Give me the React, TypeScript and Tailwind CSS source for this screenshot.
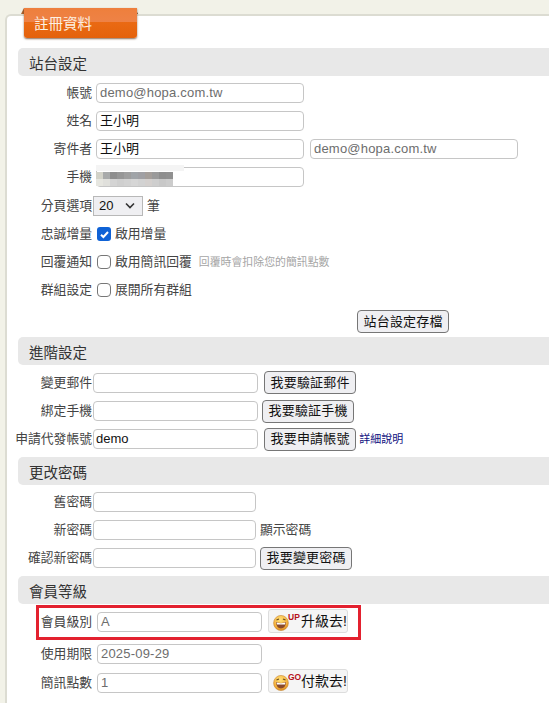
import React from "react";

const cjk = { fontFamily: '"Liberation Sans", "Noto Sans CJK TC", sans-serif' };

function Field({ value = "", w, dim = false, bold = false }: { value?: string; w: string; dim?: boolean; bold?: boolean }) {
  return (
    <div className={`${w} h-5 shrink-0 flex items-center rounded-[4px] border border-[#c6c6c6] bg-white px-[3px] whitespace-nowrap overflow-hidden ${dim ? "text-[13px] text-[#6d6d6d] tracking-[0.2px]" : "text-[13px] text-[#111]"} ${bold ? "text-[13.5px] font-medium !px-[2px]" : ""}`}>
      {value}
    </div>
  );
}

function Btn({ children }: { children: React.ReactNode }) {
  return (
    <div className="h-[23px] shrink-0 flex items-center rounded-[4px] border border-[#767676] bg-[#efeff2] px-[5.5px] text-[13px] tracking-[0.2px] text-[#111] whitespace-nowrap">
      {children}
    </div>
  );
}

function Row({ label, gap = "gap-[1px]", h = "h-[28px]", children }: { label: string; gap?: string; h?: string; children: React.ReactNode }) {
  return (
    <div className={`flex items-center ${gap} ${h}`}>
      <div className="w-[92px] shrink-0 text-right text-[12.8px] text-[#444] whitespace-nowrap">{label}</div>
      {children}
    </div>
  );
}

function Head({ children, className = "" }: { children: React.ReactNode; className?: string }) {
  return (
    <div className={`ml-[18px] h-[28px] flex items-center rounded-l-[5px] bg-[#e8e8e8] pl-[11px] pt-[6px] text-[14.5px] text-[#333] ${className}`}>
      {children}
    </div>
  );
}

function Box({ checked = false }: { checked?: boolean }) {
  return checked ? (
    <span className="flex h-[14px] w-[14px] shrink-0 items-center justify-center rounded-[3px] bg-[#0f62d6]">
      <svg width="11" height="11" viewBox="0 0 11 11"><path d="M2 5.7 4.4 8 9 3" fill="none" stroke="#fff" strokeWidth="2" /></svg>
    </span>
  ) : (
    <span className="h-[14px] w-[14px] shrink-0 rounded-[4px] border border-[#777] bg-white" />
  );
}

function Smile({ tag, colour }: { tag: string; colour: string }) {
  return (
    <svg width="30" height="20" viewBox="0 0 30 20" className="shrink-0">
      <defs>
        <radialGradient id={`g${tag}`} cx="45%" cy="30%" r="70%">
          <stop offset="0" stopColor="#ffe27a" />
          <stop offset="0.7" stopColor="#f5b13c" />
          <stop offset="1" stopColor="#d98a22" />
        </radialGradient>
      </defs>
      <ellipse cx="8" cy="12" rx="7.4" ry="7.6" fill={`url(#g${tag})`} stroke="#c98a35" strokeWidth="0.6" />
      <path d="M3.5 9 6 7.9M12.5 9 10 7.9" stroke="#6b4a20" strokeWidth="1.1" fill="none" />
      <path d="M3 11Q8 13 13 11Q12.5 17.5 8 17.5Q3.5 17.5 3 11Z" fill="#8a4a2c" />
      <path d="M3.6 11.5Q8 13 12.4 11.5L12 13.5H4Z" fill="#fff" />
      <text x="15" y="9" fontSize="8.5" fontWeight="700" fill={colour} fontFamily="Liberation Sans, sans-serif">{tag}</text>
    </svg>
  );
}

function Pay({ tag, label, className }: { tag: string; label: string; className: string }) {
  return (
    <div className={`flex h-[24px] w-[80px] shrink-0 items-center rounded-[3px] border border-[#ddd] bg-[#f5f5f5] pl-[4px] text-[14px] text-[#111] ${className}`}>
      <Smile tag={tag} colour="#b5121b" />
      <span className="-ml-[2px]">{label}</span>
    </div>
  );
}

const DARK = ["#d2d2c8", "#a8aaaa", "#8e8e8e", "#969696", "#9e9e9e", "#a0a4a8", "#a0a0a4", "#a49e9a", "#9a9a9a", "#8e8e8e", "#909090"];
const LIGHT = ["#e6e6e0", "#e0e0dc", "#d4d4d4", "#cfcfcf", "#d2d2d2", "#d6d6d6", "#d2d2d2", "#d4d0ce", "#cecece", "#c8c8c8", "#cccccc"];

const text = "text-[12.8px] text-[#444] whitespace-nowrap";

export default function App() {
  return (
    <div className="relative h-[703px] w-[549px] overflow-hidden bg-[#f2f2e8]" style={cjk}>
      <svg width="118" height="8" viewBox="0 0 118 8" className="absolute left-[21px] top-[8px] z-0">
        <path d="M3 0 0 6H3Z" fill="#a8622e" />
        <path d="M114 0 117 6H114Z" fill="#6b3a18" />
      </svg>
      <div className="absolute left-[24px] top-[8px] z-10 flex h-[30px] w-[113px] items-center rounded-b-[3px] bg-[linear-gradient(#ee7f3c,#ee8246_46%,#ea6a14_47%,#e4620c)] pl-[10px] pt-[4px] text-[14.5px] text-[#fdf1e3] shadow-[0_1px_2px_rgba(90,50,20,0.7)]">
        註冊資料
      </div>
      <div className="ml-[5px] mt-[14px] h-[689px] rounded-tl-[6px] border-l-2 border-t-2 border-[#dcdcd2] bg-white pt-[32px]">
        <div className="-ml-[7px]">
          <Head>站台設定</Head>
          <div className="mt-[3px]">
            <Row label="帳號" gap="gap-[4px]"><Field w="w-[208px]" value="demo@hopa.com.tw" dim /></Row>
            <Row label="姓名" gap="gap-[4px]"><Field w="w-[208px]" value="王小明" /></Row>
            <Row label="寄件者" gap="gap-[4px]">
              <Field w="w-[208px]" value="王小明" />
              <div className="ml-[2px]"><Field w="w-[208px]" value="demo@hopa.com.tw" dim /></div>
            </Row>
            <Row label="手機" gap="gap-[4px]">
              <div className="relative">
                <Field w="w-[208px]" />
                <div className="absolute -top-[2px] left-0 h-[6px] w-[88px] bg-[#f4f4f4]" />
                <div className="absolute left-0 top-[5px] flex">
                  {DARK.map((c, i) => (
                    <div key={i} className="h-[7px] w-[7px]" style={{ backgroundColor: c }} />
                  ))}
                </div>
                <div className="absolute left-0 top-[12px] flex">
                  {LIGHT.map((c, i) => (
                    <div key={i} className="h-[7px] w-[7px]" style={{ backgroundColor: c }} />
                  ))}
                </div>
              </div>
            </Row>
            <Row label="分頁選項" h="h-[29px]">
              <div className="flex h-[20px] w-[50px] items-center justify-between border border-[#b8b8b8] bg-[#efeff2] pl-[5px] pr-[7px] text-[13px] font-medium text-[#111]">
                20
                <svg width="10" height="7" viewBox="0 0 10 7"><path d="M1 1.5 5 5.5 9 1.5" fill="none" stroke="#333" strokeWidth="1.6" /></svg>
              </div>
              <span className={`ml-[3px] ${text}`}>筆</span>
            </Row>
            <Row label="忠誠增量" gap="gap-[5px]">
              <Box checked />
              <span className={`-ml-[1px] ${text}`}>啟用增量</span>
            </Row>
            <Row label="回覆通知" gap="gap-[5px]">
              <Box />
              <span className={`-ml-[1px] ${text}`}>啟用簡訊回覆</span>
              <span className="ml-[2px] text-[10.9px] text-[#a5a5a5]">回覆時會扣除您的簡訊點數</span>
            </Row>
            <Row label="群組設定" gap="gap-[5px]">
              <Box />
              <span className={`-ml-[1px] ${text}`}>展開所有群組</span>
            </Row>
          </div>
          <div className="flex h-[33px] items-start pl-[357px] pt-[6px]">
            <Btn>站台設定存檔</Btn>
          </div>
          <Head>進階設定</Head>
          <div className="mt-[3px]">
            <Row label="變更郵件" h="h-[29px]"><Field w="w-[165px]" /><div className="ml-[5px]"><Btn>我要驗証郵件</Btn></div></Row>
            <Row label="綁定手機"><Field w="w-[165px]" /><div className="ml-[3px]"><Btn>我要驗証手機</Btn></div></Row>
            <Row label="申請代發帳號">
              <Field w="w-[165px]" value="demo" bold />
              <div className="ml-[5px]"><Btn>我要申請帳號</Btn></div>
              <span className="ml-[2px] text-[11px] text-[#101080]">詳細說明</span>
            </Row>
          </div>
          <Head className="mt-[4px]">更改密碼</Head>
          <div className="mt-[3px]">
            <Row label="舊密碼"><Field w="w-[163px]" /></Row>
            <Row label="新密碼"><Field w="w-[163px]" /><span className={`ml-[3px] ${text}`}>顯示密碼</span></Row>
            <Row label="確認新密碼"><Field w="w-[163px]" /><div className="ml-[3px]"><Btn>我要變更密碼</Btn></div></Row>
          </div>
          <Head className="mt-[4px]">會員等級</Head>
          <div className="relative mt-[3px]">
            <Row label="會員級別" gap="gap-[5px]" h="h-[30px]"><Field w="w-[165px]" value="A" dim /><Pay tag="UP" label="升級去!" className="ml-[1px] -mt-[2px]" /></Row>
            <Row label="使用期限" gap="gap-[5px]" h="h-[34px]"><Field w="w-[165px]" value="2025-09-29" dim /></Row>
            <Row label="簡訊點數" gap="gap-[5px]" h="h-[24px]"><Field w="w-[165px]" value="1" dim /><Pay tag="GO" label="付款去!" className="ml-[1px] -mt-[4px]" /></Row>
            <div className="absolute left-[36px] -top-[2px] h-[35px] w-[325px] border-[3px] border-[#e3212f]" />
          </div>
        </div>
      </div>
    </div>
  );
}
